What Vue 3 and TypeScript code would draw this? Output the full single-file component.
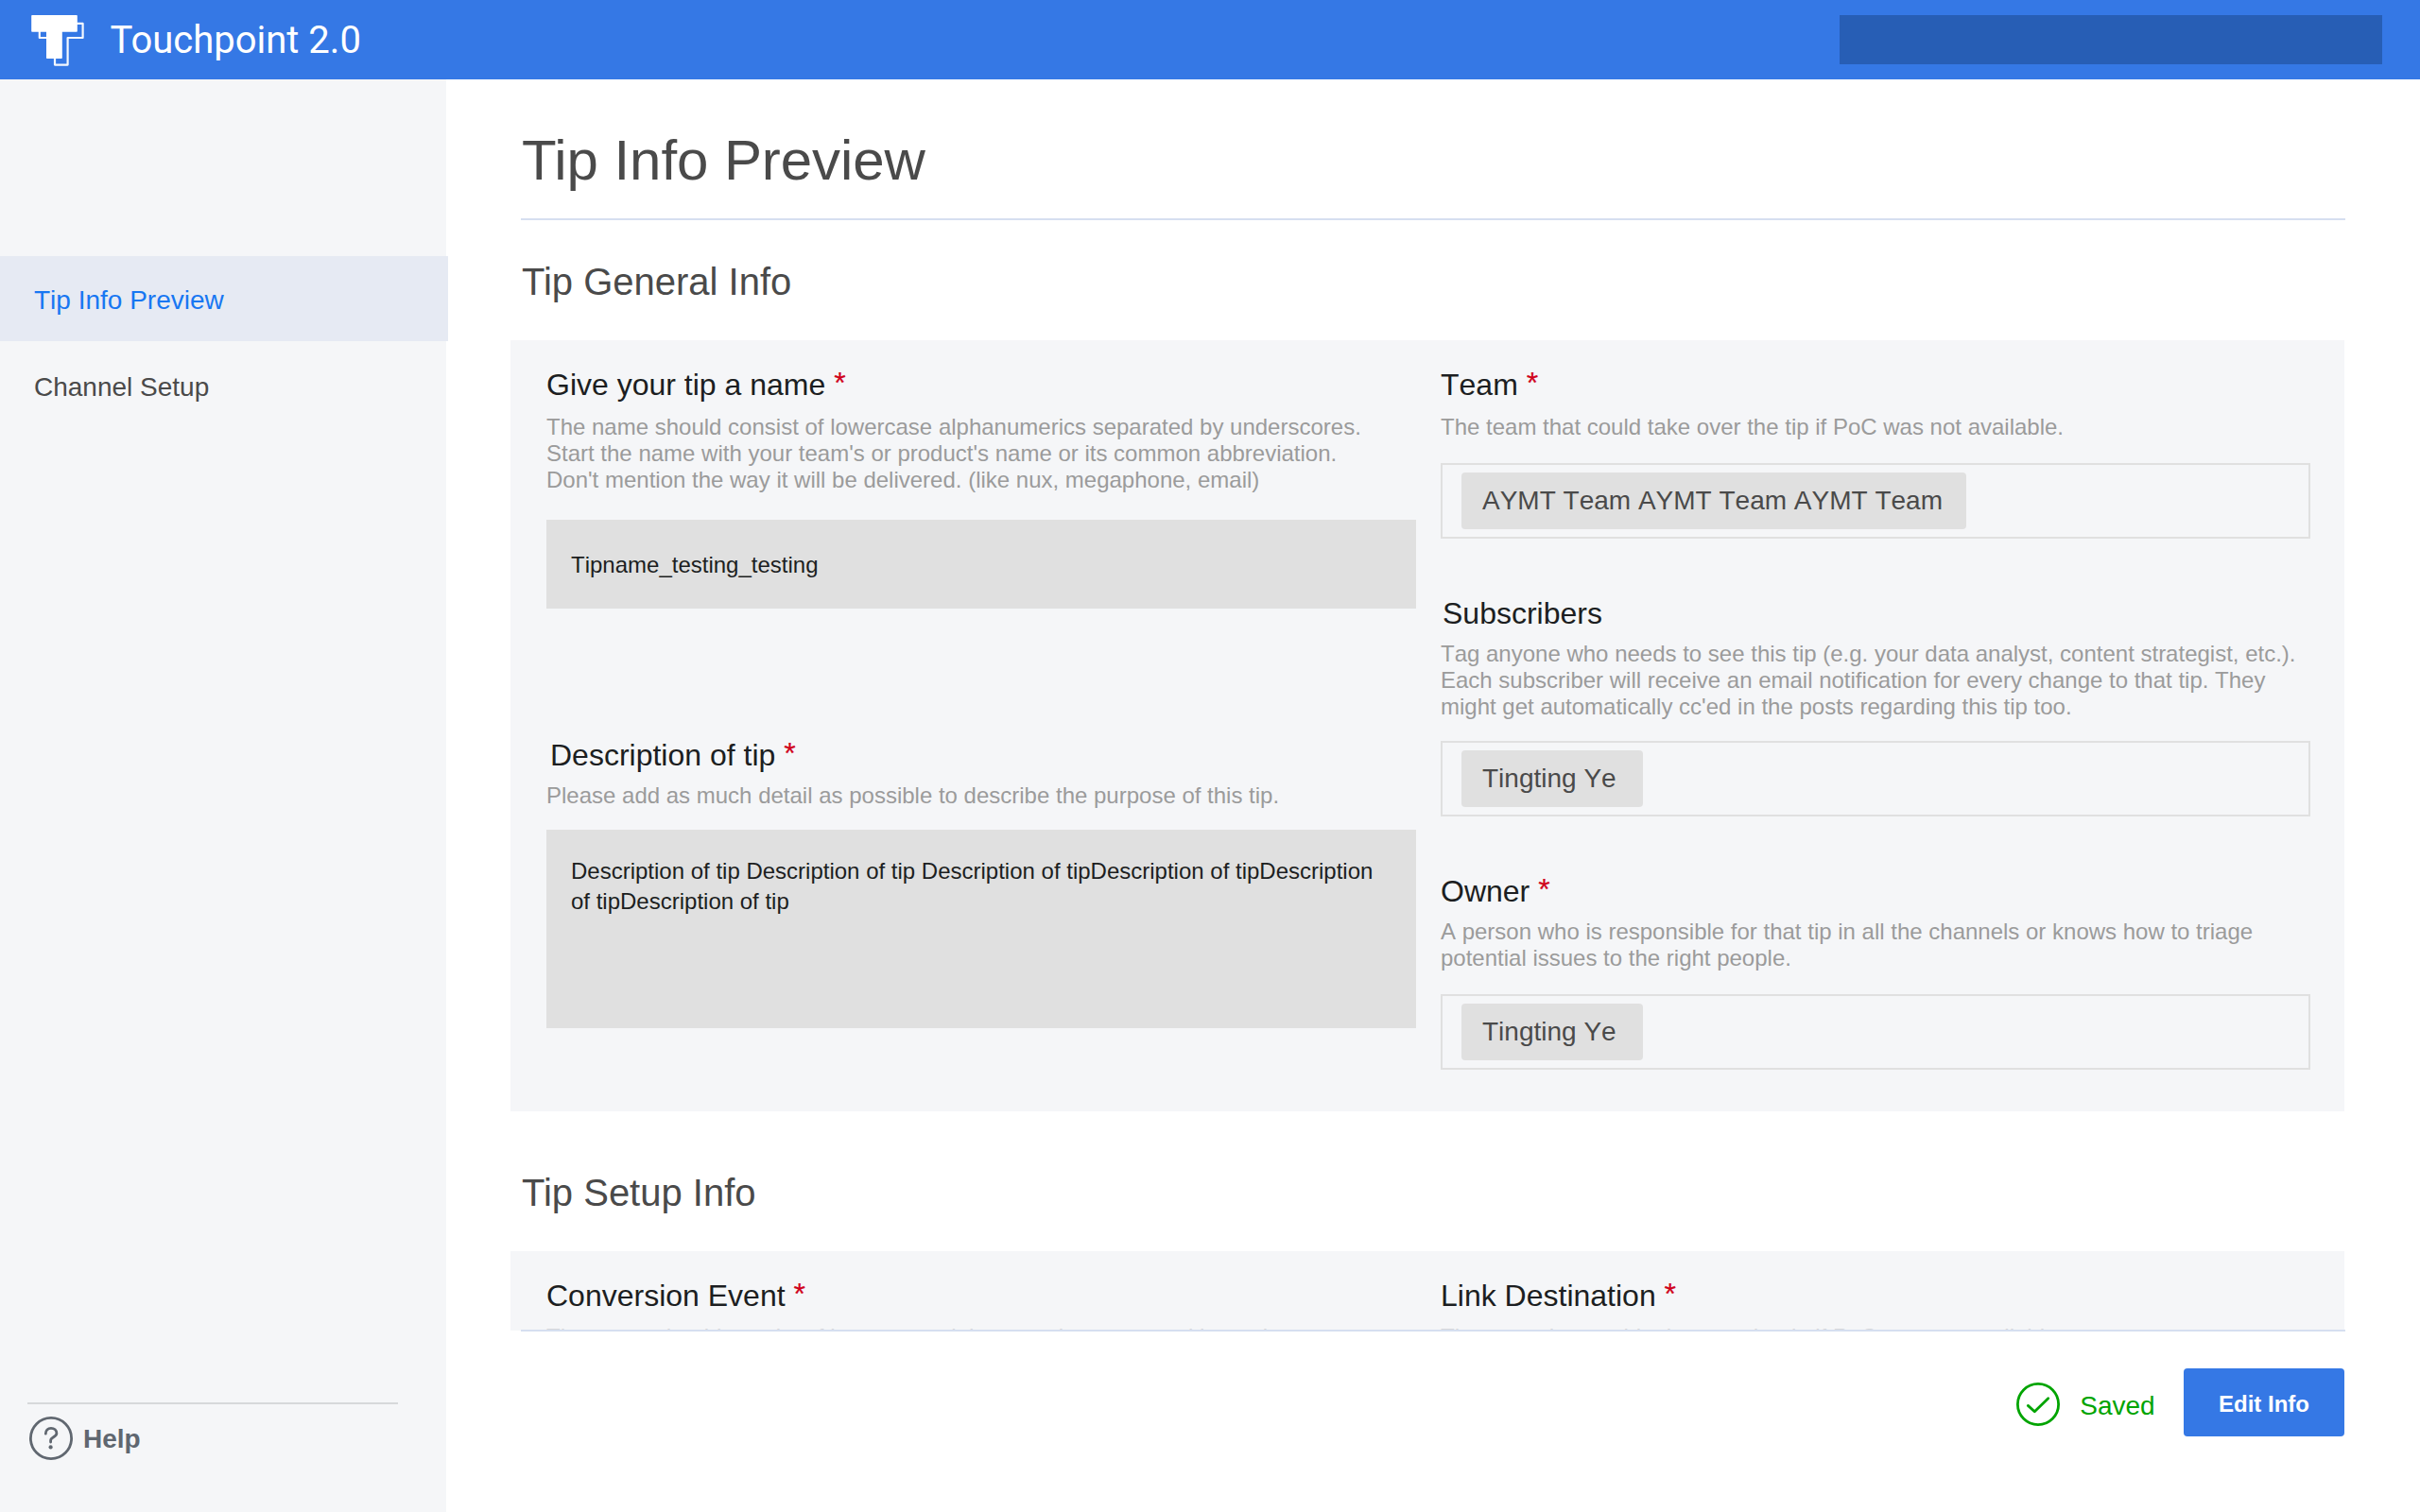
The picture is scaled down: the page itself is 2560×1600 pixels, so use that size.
<script setup lang="ts">
interface Field {
  id: string
  label: string
  required?: boolean
  help: string[]
  kind?: 'text' | 'area' | 'tokens'
  value?: string
}

const navItems = [
  { label: 'Tip Info Preview', active: true },
  { label: 'Channel Setup', active: false },
]

const nameHelp = [
  'The name should consist of lowercase alphanumerics separated by underscores.',
  "Start the name with your team's or product's name or its common abbreviation.",
  "Don't mention the way it will be delivered. (like nux, megaphone, email)",
]
const teamHelp = ['The team that could take over the tip if PoC was not available.']

const generalColumns: Field[][] = [
  [
    { id: 'name', label: 'Give your tip a name', required: true, help: nameHelp, kind: 'text', value: 'Tipname_testing_testing' },
    {
      id: 'description',
      label: 'Description of tip',
      required: true,
      help: ['Please add as much detail as possible to describe the purpose of this tip.'],
      kind: 'area',
      value: 'Description of tip Description of tip Description of tipDescription of tipDescription of tipDescription of tip',
    },
  ],
  [
    { id: 'team', label: 'Team', required: true, help: teamHelp, kind: 'tokens', value: 'AYMT Team AYMT Team AYMT Team' },
    {
      id: 'subscribers',
      label: 'Subscribers',
      help: [
        'Tag anyone who needs to see this tip (e.g. your data analyst, content strategist, etc.).',
        'Each subscriber will receive an email notification for every change to that tip. They',
        "might get automatically cc'ed in the posts regarding this tip too.",
      ],
      kind: 'tokens',
      value: 'Tingting Ye',
    },
    {
      id: 'owner',
      label: 'Owner',
      required: true,
      help: [
        'A person who is responsible for that tip in all the channels or knows how to triage',
        'potential issues to the right people.',
      ],
      kind: 'tokens',
      value: 'Tingting Ye',
    },
  ],
]

const setupColumns: Field[][] = [
  [{ id: 'conversion', label: 'Conversion Event', required: true, help: nameHelp.slice(0, 1) }],
  [{ id: 'link', label: 'Link Destination', required: true, help: teamHelp }],
]

const sections = [
  { title: 'Tip General Info', columns: generalColumns },
  { title: 'Tip Setup Info', columns: setupColumns },
]
</script>

<template>
  <div class="app">
    <header class="topbar">
      <svg class="logo" width="58" height="56" viewBox="0 0 58 56">
        <path
          d="M8.8 16V24H25V52.6H38.6V24H54.6V8.9H48"
          fill="none"
          stroke="#f3f7fe"
          stroke-width="2.2"
          stroke-linejoin="round"
        />
        <path d="M1 0H48a.8.8 0 0 1 .8.8V16.9a.8.8 0 0 1-.8.8H32.8V45.2a.8.8 0 0 1-.8.8H16.8a.8.8 0 0 1-.8-.8V17.7H1a.8.8 0 0 1-.8-.8V.8A.8.8 0 0 1 1 0Z" fill="#fff" />
      </svg>
      <span class="brand">Touchpoint 2.0</span>
      <div class="search"></div>
    </header>

    <div class="body">
      <aside class="sidebar">
        <nav class="nav">
          <a v-for="item in navItems" :key="item.label" class="nav-item" :class="{ active: item.active }">{{ item.label }}</a>
        </nav>
        <div class="help-link">
          <svg width="46" height="46" viewBox="0 0 46 46" fill="none" stroke="#606770">
            <circle cx="23" cy="23" r="21.6" stroke-width="2.8" />
            <path d="M17.3 18.2C17.3 14.6 19.6 12.3 23 12.3S28.9 14.7 28.9 17.7C28.9 21.6 22.6 21.8 22.6 25.2V27" stroke-width="2.8" stroke-linecap="round" />
            <circle cx="22.6" cy="32.4" r="2.1" fill="#606770" stroke="none" />
          </svg>
          <span>Help</span>
        </div>
      </aside>

      <main class="main">
        <div class="scroll">
          <h1 class="title">Tip Info Preview</h1>
          <section v-for="section in sections" :key="section.title" class="section">
            <h2 class="section-title">{{ section.title }}</h2>
            <div class="panel">
              <div v-for="(column, index) in section.columns" :key="index" class="column">
                <div v-for="field in column" :key="field.id" class="field" :class="field.id">
                  <div class="label">{{ field.label }}<span v-if="field.required" class="required">&nbsp;*</span></div>
                  <div class="hint">
                    <div v-for="line in field.help" :key="line">{{ line }}</div>
                  </div>
                  <div v-if="field.kind === 'tokens'" class="tokens">
                    <span class="token">{{ field.value }}</span>
                  </div>
                  <div v-else-if="field.kind" class="box" :class="field.kind">{{ field.value }}</div>
                </div>
              </div>
            </div>
          </section>
        </div>

        <footer class="footer">
          <svg width="46" height="46" viewBox="0 0 46 46" fill="none" stroke="#00a400" stroke-width="2.8">
            <circle cx="23" cy="23" r="21.6" />
            <path d="M12.3 24.4L19.3 30.8L33.7 16.8" stroke-linecap="round" stroke-linejoin="round" />
          </svg>
          <span class="saved">Saved</span>
          <button class="edit">Edit Info</button>
        </footer>
      </main>
    </div>
  </div>
</template>

<style>
body {
  margin: 0;
  background: #fff;
}
</style>

<style scoped>
.app {
  width: 2560px;
  height: 1600px;
  display: flex;
  flex-direction: column;
  overflow: hidden;
  background: #fff;
  font-family: 'Liberation Sans', Arial, sans-serif;
  font-kerning: none;
}
.topbar {
  flex: none;
  height: 84px;
  box-sizing: border-box;
  display: flex;
  align-items: flex-start;
  padding: 16px 40px 0 33px;
  background: #3578e5;
}
.logo {
  flex: none;
}
.brand {
  margin-left: 25.5px;
  font: 400 40px/54px Roboto, sans-serif;
  font-kerning: normal;
  color: #fff;
  white-space: nowrap;
}
.search {
  width: 574px;
  height: 52px;
  margin-left: auto;
  background: #275eb5;
}
.body {
  flex: 1;
  min-height: 0;
  display: flex;
}
.sidebar {
  flex: none;
  width: 472px;
  display: flex;
  flex-direction: column;
  justify-content: space-between;
  background: #f5f6f8;
}
.nav {
  display: flex;
  flex-direction: column;
  gap: 2px;
  margin-top: 187px;
}
.nav-item {
  box-sizing: border-box;
  width: 474px;
  height: 90px;
  padding: 2px 0 0 36px;
  font-size: 28px;
  line-height: 90px;
  color: #4a4a4a;
}
.nav-item.active {
  background: #e6eaf3;
  color: #1877f2;
}
.help-link {
  display: flex;
  align-items: flex-start;
  width: 390px;
  height: 101px;
  margin-left: 29px;
  padding: 13px 0 0 2px;
  border-top: 2px solid #d6d8da;
  font-size: 28px;
  font-weight: 700;
  line-height: 48px;
  color: #606770;
}
.help-link span {
  margin-left: 11px;
}
.main {
  flex: 1;
  min-width: 0;
  display: flex;
  flex-direction: column;
}
.scroll {
  height: 1324px;
  box-sizing: border-box;
  padding: 56px 79px 0 68px;
  overflow: hidden;
}
.title {
  margin: 0 0 0 11px;
  padding: 0 0 31px 1px;
  border-bottom: 2px solid #d6dff0;
  font-size: 60px;
  font-weight: 400;
  font-kerning: normal;
  letter-spacing: -0.07px;
  line-height: 60px;
  color: #4a4a4a;
}
.section {
  padding-top: 45px;
}
.section + .section {
  padding-top: 66px;
}
.section-title {
  margin: 0 0 42px 12px;
  font-size: 40px;
  font-weight: 400;
  font-kerning: normal;
  line-height: 40px;
  color: #4a4a4a;
}
.panel {
  box-sizing: border-box;
  width: 1940px;
  height: 816px;
  padding: 27px 36px 0 38px;
  display: flex;
  gap: 26px;
  background: #f5f6f8;
}
.column {
  width: 920px;
}
.label {
  height: 40px;
  margin-bottom: 11px;
  font-size: 32px;
  line-height: 40px;
  color: #1c1e21;
}
.required {
  vertical-align: 2px;
  line-height: 0;
  color: #d0021b;
  -webkit-text-stroke: 0.2px #d0021b;
}
.hint {
  margin-bottom: 24px;
  font-size: 24px;
  line-height: 28px;
  color: #9b9b9b;
  white-space: nowrap;
}
.name .hint {
  margin-bottom: 28px;
}
.description .hint,
.subscribers .hint {
  margin-bottom: 22px;
}
.description .label,
.subscribers .label,
.owner .label {
  margin-bottom: 9px;
}
.conversion .label,
.link .label {
  margin-bottom: 10px;
}
.conversion .hint,
.link .hint {
  color: #d6d7d9;
}
.description {
  margin-top: 135px;
}
.description .label {
  padding-left: 4px;
}
.subscribers .label {
  padding-left: 2px;
}
.subscribers,
.owner {
  margin-top: 59px;
}
.box {
  box-sizing: border-box;
  background: #e0e0e0;
  font-size: 24px;
  color: #1c1e21;
}
.box.text {
  height: 94px;
  padding: 2px 26px 0;
  line-height: 92px;
}
.box.area {
  height: 210px;
  padding: 28px 40px 0 26px;
  line-height: 32px;
}
.tokens {
  box-sizing: border-box;
  height: 80px;
  padding: 8px 20px;
  border: 2px solid #e0e0e0;
  display: flex;
}
.token {
  box-sizing: border-box;
  min-width: 192px;
  height: 60px;
  padding: 0 25px 0 22px;
  border-radius: 4px;
  background: #e0e0e0;
  font-size: 28px;
  line-height: 59px;
  color: #4a4a4a;
}
.footer {
  position: relative;
  box-sizing: border-box;
  height: 193px;
  margin: -1px 79px 0;
  padding-top: 39px;
  padding-right: 1px;
  border-top: 2px solid #d6dff0;
  display: flex;
  justify-content: flex-end;
  align-items: flex-start;
}
.footer svg {
  margin-top: 15px;
}
.saved {
  margin: 16px 30.3px 0 21.3px;
  font-size: 28px;
  line-height: 48px;
  color: #00a400;
}
.edit {
  width: 170px;
  height: 72px;
  padding: 3px 0 0;
  border: 0;
  border-radius: 4px;
  background: #3578e5;
  color: #fff;
  font: 700 24px/69px 'Liberation Sans', Arial, sans-serif;
}
</style>
